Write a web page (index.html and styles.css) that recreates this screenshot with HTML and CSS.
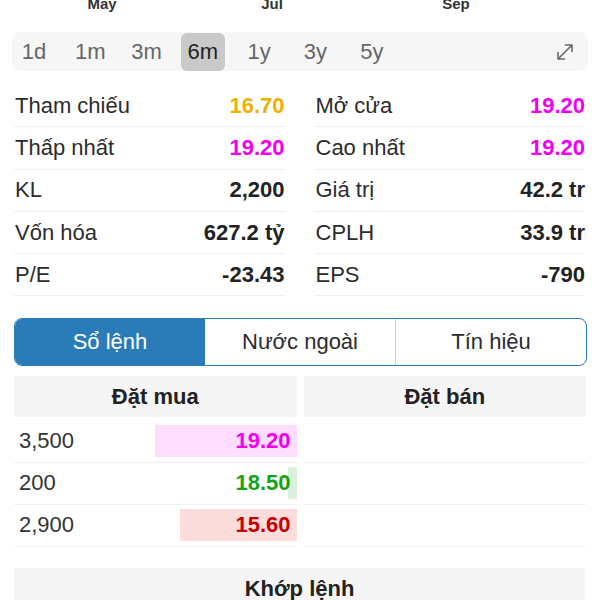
FILE: index.html
```html
<!DOCTYPE html>
<html lang="vi">
<head>
    <meta charset="UTF-8">
    <meta name="viewport" content="width=device-width, initial-scale=1.0">
    <title>Cổ phiếu</title>
    <link rel="stylesheet" href="styles.css">
</head>
<body>
    <div class="axis">
        <span class="tick tick-may">May</span>
        <span class="tick tick-jul">Jul</span>
        <span class="tick tick-sep">Sep</span>
    </div>

    <div class="periods">
        <span class="period">1d</span>
        <span class="period">1m</span>
        <span class="period">3m</span>
        <span class="period active">6m</span>
        <span class="period">1y</span>
        <span class="period">3y</span>
        <span class="period">5y</span>
        <svg class="expand" width="20" height="20" viewBox="0 0 20 20">
            <path d="M3 17 L17 3 M10.5 3 H17 V9.5 M3 10.5 V17 H9.5" fill="none" stroke="#6a6a6a" stroke-width="1.6" stroke-linecap="round" stroke-linejoin="round"/>
        </svg>
    </div>

    <div class="stats">
        <div class="stat"><span>Tham chiếu</span><b class="ref">16.70</b></div>
        <div class="stat"><span>Mở cửa</span><b class="ceil">19.20</b></div>
        <div class="stat"><span>Thấp nhất</span><b class="ceil">19.20</b></div>
        <div class="stat"><span>Cao nhất</span><b class="ceil">19.20</b></div>
        <div class="stat"><span>KL</span><b>2,200</b></div>
        <div class="stat"><span>Giá trị</span><b>42.2 tr</b></div>
        <div class="stat"><span>Vốn hóa</span><b>627.2 tỷ</b></div>
        <div class="stat"><span>CPLH</span><b>33.9 tr</b></div>
        <div class="stat"><span>P/E</span><b>-23.43</b></div>
        <div class="stat"><span>EPS</span><b>-790</b></div>
    </div>

    <div class="tabs">
        <div class="tab active">Sổ lệnh</div>
        <div class="tab">Nước ngoài</div>
        <div class="tab">Tín hiệu</div>
    </div>

    <div class="book">
        <div class="side">
            <div class="side-head">Đặt mua</div>
            <div class="order">
                <span class="vol">3,500</span>
                <span class="bar bar-ceil" style="width: 50%"></span>
                <span class="price ceil">19.20</span>
            </div>
            <div class="order">
                <span class="vol">200</span>
                <span class="bar bar-up" style="width: 2.9%"></span>
                <span class="price up">18.50</span>
            </div>
            <div class="order">
                <span class="vol">2,900</span>
                <span class="bar bar-down" style="width: 41.4%"></span>
                <span class="price down">15.60</span>
            </div>
        </div>
        <div class="side">
            <div class="side-head">Đặt bán</div>
            <div class="order"></div>
            <div class="order"></div>
            <div class="order"></div>
        </div>
    </div>

    <div class="match-head">Khớp lệnh</div>
</body>
</html>
```

FILE: styles.css
```css
body {
    font-family: "Liberation Sans", Arial, sans-serif;
    margin: 0;
    background: #ffffff;
    color: #2b2b2b;
    overflow: hidden;
}

.axis {
    position: relative;
    height: 10px;
}

.tick {
    position: absolute;
    top: -5px;
    transform: translateX(-50%);
    font-size: 15px;
    font-weight: bold;
    color: #333;
}

.tick-may { left: 102px; }
.tick-jul { left: 272px; }
.tick-sep { left: 456px; }

.periods {
    display: flex;
    align-items: center;
    gap: 12.3px;
    height: 39px;
    margin: 22px 12px 0;
    background-color: #f6f6f6;
    border-radius: 9px;
}

.period {
    width: 44px;
    height: 38px;
    line-height: 38px;
    text-align: center;
    font-size: 22px;
    color: #666;
    border-radius: 6px;
}

.period.active {
    background-color: #c9c9c9;
    color: #222;
}

.expand {
    margin-left: auto;
    margin-right: 13px;
}

.stats {
    display: grid;
    grid-template-columns: 1fr 1fr;
    column-gap: 30px;
    margin: 14px 15px 0 14px;
}

.stat {
    display: flex;
    justify-content: space-between;
    align-items: center;
    height: 42.3px;
    box-sizing: border-box;
    padding-left: 1px;
    border-bottom: 1px solid #efefef;
    font-size: 22px;
}

.stat b {
    color: #222;
}

.ref { color: #ecb000; }
.ceil { color: #f000f0; }
.up { color: #15a315; }
.down { color: #c40000; }

.stat b.ref { color: #ecb000; }
.stat b.ceil { color: #f000f0; }

.tabs {
    display: flex;
    height: 48px;
    margin: 22px 13px 0 14px;
    border: 1px solid #2a7cb9;
    border-radius: 8px;
    overflow: hidden;
    box-sizing: border-box;
}

.tab {
    flex: 1;
    display: flex;
    align-items: center;
    justify-content: center;
    font-size: 22px;
    color: #2b2b2b;
    border-left: 1px solid #cfcfcf;
}

.tab:first-child {
    border-left: none;
}

.tab.active {
    background-color: #2a7cb9;
    color: #fff;
}

.tab.active + .tab {
    border-left: none;
}

.book {
    display: grid;
    grid-template-columns: 1fr 1fr;
    column-gap: 7px;
    margin: 10px 14px 0;
}

.side-head {
    height: 41px;
    line-height: 41px;
    margin-bottom: 4px;
    text-align: center;
    font-size: 22px;
    font-weight: bold;
    color: #222;
    background-color: #f5f5f5;
}

.order {
    position: relative;
    display: flex;
    justify-content: space-between;
    align-items: center;
    height: 42px;
    box-sizing: border-box;
    padding: 4px 6px 5px 5px;
    border-bottom: 1px solid #f0f0f0;
    font-size: 22px;
}

.bar {
    position: absolute;
    right: 0;
    top: 4px;
    bottom: 5px;
}

.bar-ceil { background-color: #fddcfd; }
.bar-up { background-color: #d9f0d9; }
.bar-down { background-color: #fddcdc; }

.vol {
    color: #333;
}

.price {
    position: relative;
    font-weight: bold;
}

.match-head {
    height: 41px;
    line-height: 41px;
    margin: 21px 15px 0 14px;
    text-align: center;
    font-size: 22px;
    font-weight: bold;
    color: #222;
    background-color: #f5f5f5;
}
```
